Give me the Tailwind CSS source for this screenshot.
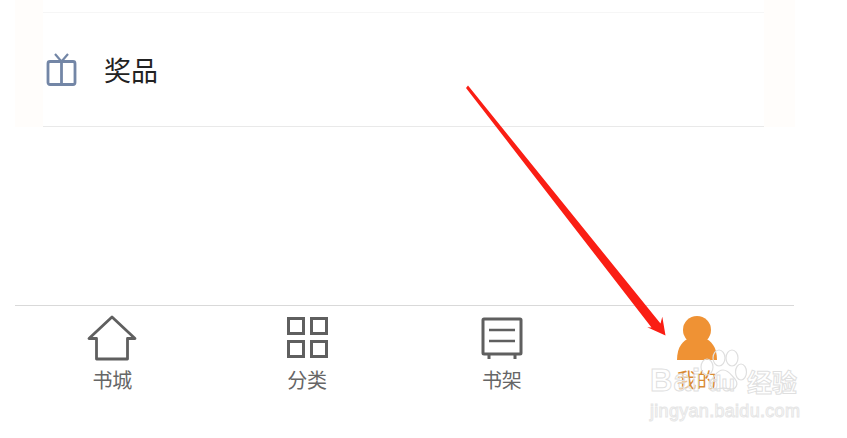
<!DOCTYPE html>
<html lang="zh-CN">
<head>
    <meta charset="UTF-8">
    <title>我的</title>
    <script src="https://cdn.jsdelivr.net/npm/@tailwindcss/browser@4"></script>
</head>
<body class="bg-white font-['Noto_Sans_CJK_SC','Noto_Sans',sans-serif]">
<div class="relative w-[847px] h-[438px] overflow-hidden bg-white">

    <!-- list panel -->
    <div class="ml-[15px] w-[780px] h-[127px] bg-[#fffdfb] px-[28px]">
        <div class="w-[721px] h-[127px] bg-white pt-[12px]">
            <div class="h-[115px] border-y border-t-[#f6f6f6] border-b-[#e9e9e9] flex items-center">
                <svg class="w-[32px] h-[34px] mt-[-1px] ml-[2px]" viewBox="0 0 32 34" fill="none" stroke="#7386a6" stroke-width="2.800" stroke-linejoin="round">
                    <rect x="3" y="9.500" width="27" height="23" rx="2"></rect>
                    <path d="M16.500 9.500v23"></path>
                    <path d="M10 2l6.500 7.500L23 2" stroke-width="2.200"></path>
                </svg>
                <span class="ml-[27px] text-[27px] leading-none text-[#222222]">奖品</span>
            </div>
        </div>
    </div>

    <!-- bottom nav -->
    <nav class="absolute left-[15px] top-[305px] w-[779px] border-t border-[#d9d9d9] grid grid-cols-4">
        <div class="flex flex-col items-center">
            <svg class="w-[50px] h-[46px] mt-[9px]" viewBox="0 0 50 46" fill="none" stroke="#5f5f5f" stroke-width="2.800" stroke-linejoin="round">
                <path d="M25 2L2 23.500h7.500V44h31V23.500H48z"></path>
            </svg>
            <span class="mt-[5px] text-[20px] leading-[28px] text-[#666666]">书城</span>
        </div>
        <div class="flex flex-col items-center">
            <div class="w-[41px] h-[41px] mt-[11px] mb-[3px] grid grid-cols-2 gap-[5px]">
                <div class="border-[3px] border-[#5f5f5f]"></div>
                <div class="border-[3px] border-[#5f5f5f]"></div>
                <div class="border-[3px] border-[#5f5f5f]"></div>
                <div class="border-[3px] border-[#5f5f5f]"></div>
            </div>
            <span class="mt-[5px] text-[20px] leading-[28px] text-[#666666]">分类</span>
        </div>
        <div class="flex flex-col items-center">
            <svg class="w-[42px] h-[43px] mt-[11px] mb-[1px]" viewBox="0 0 42 43" fill="none" stroke="#5f5f5f" stroke-width="3">
                <rect x="2" y="2" width="38" height="35" rx="1"></rect>
                <path d="M8 13h26M8 24h26" stroke-width="2.600"></path>
                <path d="M8 37v5M34 37v5"></path>
            </svg>
            <span class="mt-[5px] text-[20px] leading-[28px] text-[#666666]">书架</span>
        </div>
        <div class="flex flex-col items-center">
            <svg class="w-[40px] h-[46px] mt-[9px]" viewBox="0 0 40 46" fill="#ef9234">
                <circle cx="20" cy="15" r="14"></circle>
                <path d="M0 45c0-13 6-20 13-22h14c7 2 13 9 13 22z"></path>
            </svg>
            <span class="mt-[5px] text-[20px] leading-[28px] text-[#d98a32]">我的</span>
        </div>
    </nav>

    <!-- red arrow -->
    <svg class="absolute left-0 top-0 w-[847px] h-[438px] pointer-events-none" viewBox="0 0 847 438">
        <path d="M466 88L468 85.500L660.500 323.500L662.300 316.700L665.500 335.500L647.300 327.300L651.500 327.500Z" fill="#fa1e14"></path>
    </svg>

    <!-- watermark -->
    <div class="absolute left-[650px] top-[364px] text-[31px] leading-[34px] tracking-[1px] font-['Liberation_Sans',sans-serif] font-bold text-white/50 [-webkit-text-stroke:1px_#dfdfdf]">Bai</div>
    <div class="absolute left-[708px] top-[372px] text-[22px] leading-[24px] font-['Liberation_Sans',sans-serif] font-bold text-white/50 [-webkit-text-stroke:1px_#dfdfdf]">du</div>
    <div class="absolute left-[747px] top-[366px] text-[25px] leading-[30px] font-bold text-white/50 [-webkit-text-stroke:1px_#dfdfdf]">经验</div>
    <div class="absolute left-[650px] top-[400px] text-[18px] leading-[22px] tracking-[0.3px] font-['Liberation_Sans',sans-serif] text-white/50 [-webkit-text-stroke:1px_#e6e6e6]">jingyan.baidu.com</div>
    <svg class="absolute left-[698px] top-[346px] w-[50px] h-[46px] pointer-events-none" viewBox="0 0 50 46" fill="none" stroke="#dfdfdf" stroke-width="1.200">
        <ellipse cx="9" cy="21" rx="6" ry="8"></ellipse>
        <ellipse cx="21" cy="12" rx="6" ry="8"></ellipse>
        <ellipse cx="34" cy="12" rx="6" ry="8"></ellipse>
        <ellipse cx="43" cy="26" rx="5.500" ry="8"></ellipse>
        <path d="M25 24c-6 0-7 5-11 9-4 5-1 11 5 10 4-1 9-1 13 0 6 1 9-5 5-10-4-4-6-9-12-9z"></path>
    </svg>
</div>
</body>
</html>
